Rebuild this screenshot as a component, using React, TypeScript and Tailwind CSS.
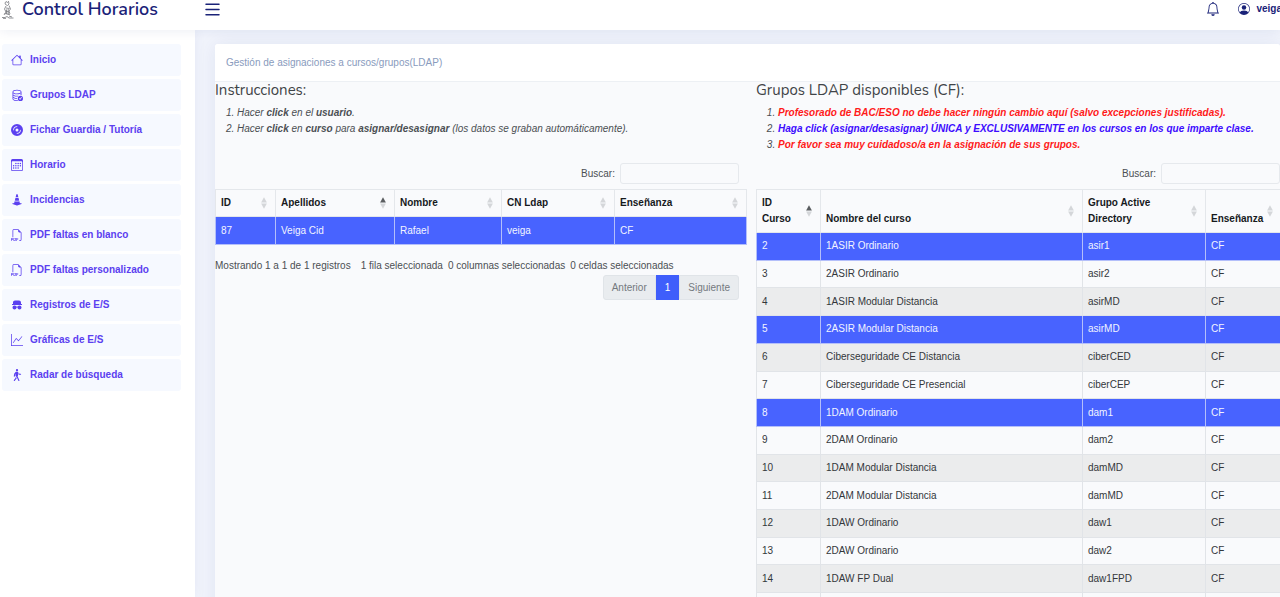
import type { ReactNode } from "react"
import clsx from "clsx"
import type { IconType } from "react-icons"
import {
  BsBell,
  BsCalendar3,
  BsConeStriped,
  BsDatabaseCheck,
  BsDiscFill,
  BsFiletypePdf,
  BsGraphUp,
  BsHouse,
  BsList,
  BsPersonCircle,
  BsPersonWalking,
} from "react-icons/bs"
import { RiSpyFill } from "react-icons/ri"

const menu: { label: string; icon: IconType }[] = [
  { label: "Inicio", icon: BsHouse },
  { label: "Grupos LDAP", icon: BsDatabaseCheck },
  { label: "Fichar Guardia / Tutoría", icon: BsDiscFill },
  { label: "Horario", icon: BsCalendar3 },
  { label: "Incidencias", icon: BsConeStriped },
  { label: "PDF faltas en blanco", icon: BsFiletypePdf },
  { label: "PDF faltas personalizado", icon: BsFiletypePdf },
  { label: "Registros de E/S", icon: RiSpyFill },
  { label: "Gráficas de E/S", icon: BsGraphUp },
  { label: "Radar de búsqueda", icon: BsPersonWalking },
]

interface Column {
  label: string
  width: string
  sorted?: boolean
}

interface Row {
  cells: string[]
  selected?: boolean
}

const userColumns: Column[] = [
  { label: "ID", width: "w-[60px]" },
  { label: "Apellidos", width: "w-[119px]", sorted: true },
  { label: "Nombre", width: "w-[107px]" },
  { label: "CN Ldap", width: "w-[113px]" },
  { label: "Enseñanza", width: "w-[132px]" },
]

const users: Row[] = [{ cells: ["87", "Veiga Cid", "Rafael", "veiga", "CF"], selected: true }]

const courseColumns: Column[] = [
  { label: "ID Curso", width: "w-[64px]", sorted: true },
  { label: "Nombre del curso", width: "w-[262px]" },
  { label: "Grupo Active Directory", width: "w-[123px]" },
  { label: "Enseñanza", width: "w-[76px]" },
]

const courses: Row[] = [
  { cells: ["2", "1ASIR Ordinario", "asir1", "CF"], selected: true },
  { cells: ["3", "2ASIR Ordinario", "asir2", "CF"] },
  { cells: ["4", "1ASIR Modular Distancia", "asirMD", "CF"] },
  { cells: ["5", "2ASIR Modular Distancia", "asirMD", "CF"], selected: true },
  { cells: ["6", "Ciberseguridade CE Distancia", "ciberCED", "CF"] },
  { cells: ["7", "Ciberseguridade CE Presencial", "ciberCEP", "CF"] },
  { cells: ["8", "1DAM Ordinario", "dam1", "CF"], selected: true },
  { cells: ["9", "2DAM Ordinario", "dam2", "CF"] },
  { cells: ["10", "1DAM Modular Distancia", "damMD", "CF"] },
  { cells: ["11", "2DAM Modular Distancia", "damMD", "CF"] },
  { cells: ["12", "1DAW Ordinario", "daw1", "CF"] },
  { cells: ["13", "2DAW Ordinario", "daw2", "CF"] },
  { cells: ["14", "1DAW FP Dual", "daw1FPD", "CF"] },
  { cells: ["", "", "", ""] },
]

function SortIcon({ sorted }: { sorted?: boolean }) {
  return (
    <svg viewBox="0 0 6 12" className="h-3 w-[6px] shrink-0" aria-hidden="true">
      <path d="M3 0.3 5.9 5.5H0.1Z" fill={sorted ? "#5a5d60" : "#d4d6d9"} />
      <path d="M3 11.7 0.1 6.5H5.9Z" fill="#d4d6d9" />
    </svg>
  )
}

function DataTable({
  columns,
  rows,
  className,
  headClassName,
}: {
  columns: Column[]
  rows: Row[]
  className?: string
  headClassName?: string
}) {
  return (
    <table className={clsx("w-full table-fixed border-collapse border border-[#e4e7eb] text-left", className)}>
      <thead>
        <tr>
          {columns.map((col) => (
            <th
              key={col.label}
              scope="col"
              className={clsx("border border-[#e4e7eb] px-[5px] py-[5px] align-bottom font-bold text-[#16191c]", col.width)}
            >
              <div className={clsx("flex items-center justify-between gap-1", headClassName)}>
                <span className="self-end">{col.label}</span>
                <span className="pr-[3px]">
                  <SortIcon sorted={col.sorted} />
                </span>
              </div>
            </th>
          ))}
        </tr>
      </thead>
      <tbody>
        {rows.map((row, i) => (
          <tr
            key={i}
            className={clsx(
              row.selected ? "bg-[#4863ff] text-[#f2f4ff]" : i % 2 === 0 ? "bg-[#ebeced] text-[#33373b]" : "text-[#33373b]",
            )}
          >
            {row.cells.map((cell, j) => (
              <td
                key={j}
                className={clsx("h-[27px] border px-[5px]", row.selected ? "border-[#b4bffa]" : "border-[#e1e4e8]")}
              >
                {cell}
              </td>
            ))}
          </tr>
        ))}
      </tbody>
    </table>
  )
}

function SearchField({ id }: { id: string }) {
  return (
    <div className="flex items-center justify-end gap-[5px]">
      <label htmlFor={id}>Buscar:</label>
      <input
        id={id}
        type="search"
        className="h-[21px] w-[119px] rounded-[3px] border border-[#e6e9ed] bg-[#f9fafc] px-1 outline-none"
      />
    </div>
  )
}

function Panel({ title, children, items }: { title: string; children: ReactNode; items: ReactNode[] }) {
  return (
    <section className="min-w-0">
      <h2 className="font-['Nunito','Noto_Sans',sans-serif] text-[15px] leading-4 text-[#3f4447]">{title}</h2>
      <ol className="mt-[7px] min-h-[58px] list-decimal pl-[22px] italic leading-4">
        {items.map((item, i) => (
          <li key={i}>{item}</li>
        ))}
      </ol>
      {children}
    </section>
  )
}

export default function App() {
  return (
    <div className="flex h-screen flex-col overflow-hidden bg-[#f1f4fc] font-['Liberation_Sans',Arial,sans-serif] text-[10px] leading-4 text-[#4b4f53]">
      <header className="z-10 flex h-[30px] shrink-0 items-center bg-white pb-3 text-[#1a2278] shadow-[0_1px_12px_rgba(1,41,112,0.08)]">
        <div className="flex w-[202px] shrink-0 items-center gap-2">
          <svg viewBox="0 0 12 20" className="ml-[2px] h-5 w-3 shrink-0" fill="none" stroke="#77797d" strokeWidth="0.8" aria-hidden="true">
            <path d="M3 4 4 2.5 5.5 3.5 6.5 2.3 7 5 5.5 6.5 3.5 5.5ZM4 7 2.5 10 4 13 2 16M7 6.5 8.5 10 7 12 8 15M4 9 7.5 9.5M3.5 12 7 13M2.5 14.5 8 15.5M4.5 10.5V15M6.2 10V16" />
            <path d="M0 18.5H3L5 17.5 7 19H11.5M1 19.6H4M7 17 10 18" />
          </svg>
          <a href="#" className="whitespace-nowrap font-['Nunito','Noto_Sans',sans-serif] text-[18px] font-semibold leading-[18px]">
            Control Horarios
          </a>
        </div>
        <button type="button" aria-label="Menú">
          <BsList className="size-[21px]" />
        </button>
        <div className="-mr-[2px] ml-auto flex items-center gap-[18px]">
          <button type="button" aria-label="Avisos">
            <BsBell className="size-[14px]" />
          </button>
          <a href="#" className="flex items-center gap-[6px] font-bold">
            <BsPersonCircle className="size-3" />
            veiga
          </a>
        </div>
      </header>

      <div className="flex min-h-0 flex-1">
        <nav className="w-[195px] shrink-0 bg-white pl-[2px] pr-[14px] pt-[14px] shadow-[0_0_12px_rgba(1,41,112,0.06)]">
          <ul className="flex flex-col gap-[3px]">
            {menu.map(({ label, icon: Icon }) => (
              <li key={label}>
                <a
                  href="#"
                  className="flex h-8 items-center gap-[7px] rounded-[3px] bg-[#f6f9ff] pl-[9px] font-bold text-[#5b40f0]"
                >
                  <Icon className="size-3" />
                  {label}
                </a>
              </li>
            ))}
          </ul>
        </nav>

        <main className="min-w-0 flex-1 pl-5 pt-[14px]">
          <div className="rounded-t-[3px] bg-[#f9fafc] shadow-[0_0_20px_rgba(1,41,112,0.08)]">
            <div className="rounded-t-[3px] border-b border-[#edf0f4] bg-white px-[11px] pb-[10px] pt-[11px] text-[#899bbd]">
              Gestión de asignaciones a cursos/grupos(LDAP)
            </div>

            <div className="grid grid-cols-[531fr_525fr] gap-[11px]">
              <Panel
                title="Instrucciones:"
                items={[
                  <>
                    Hacer <b>click</b> en el <b>usuario</b>.
                  </>,
                  <>
                    Hacer <b>click</b> en <b>curso</b> para <b>asignar/desasignar</b> (los datos se graban automáticamente).
                  </>,
                ]}
              >
                <div className="pr-[6px]">
                  <SearchField id="buscar-usuario" />
                </div>
                <DataTable columns={userColumns} rows={users} className="mt-[5px] h-[56px]" />
                <div className="mt-[13px] flex gap-[10px] whitespace-nowrap">
                  <span>Mostrando 1 a 1 de 1 registros</span>
                  <span className="flex gap-[5px]">
                    <span>1 fila seleccionada</span>
                    <span>0 columnas seleccionadas</span>
                    <span>0 celdas seleccionadas</span>
                  </span>
                </div>
                <div className="mt-px flex justify-end pr-[6px] text-[#74797e]">
                  <button type="button" className="h-[25px] rounded-l-[3px] border border-[#e0e4e8] bg-[#e9ecef] px-2">
                    Anterior
                  </button>
                  <button type="button" className="h-[25px] bg-[#3f5efb] px-[9px] text-white">
                    1
                  </button>
                  <button type="button" className="h-[25px] rounded-r-[3px] border border-[#e0e4e8] bg-[#e9ecef] px-2">
                    Siguiente
                  </button>
                </div>
              </Panel>

              <Panel
                title="Grupos LDAP disponibles (CF):"
                items={[
                  <b className="text-[#ff1a1a]">
                    Profesorado de BAC/ESO no debe hacer ningún cambio aquí (salvo excepciones justificadas).
                  </b>,
                  <b className="text-[#3d0cff]">
                    Haga click (asignar/desasignar) ÚNICA y EXCLUSIVAMENTE en los cursos en los que imparte clase.
                  </b>,
                  <b className="text-[#ff1a1a]">Por favor sea muy cuidadoso/a en la asignación de sus grupos.</b>,
                ]}
              >
                <SearchField id="buscar-curso" />
                <DataTable
                  columns={courseColumns}
                  rows={courses}
                  className="mt-[5px] h-[432px]"
                  headClassName="min-h-8"
                />
              </Panel>
            </div>
          </div>
        </main>
      </div>
    </div>
  )
}
